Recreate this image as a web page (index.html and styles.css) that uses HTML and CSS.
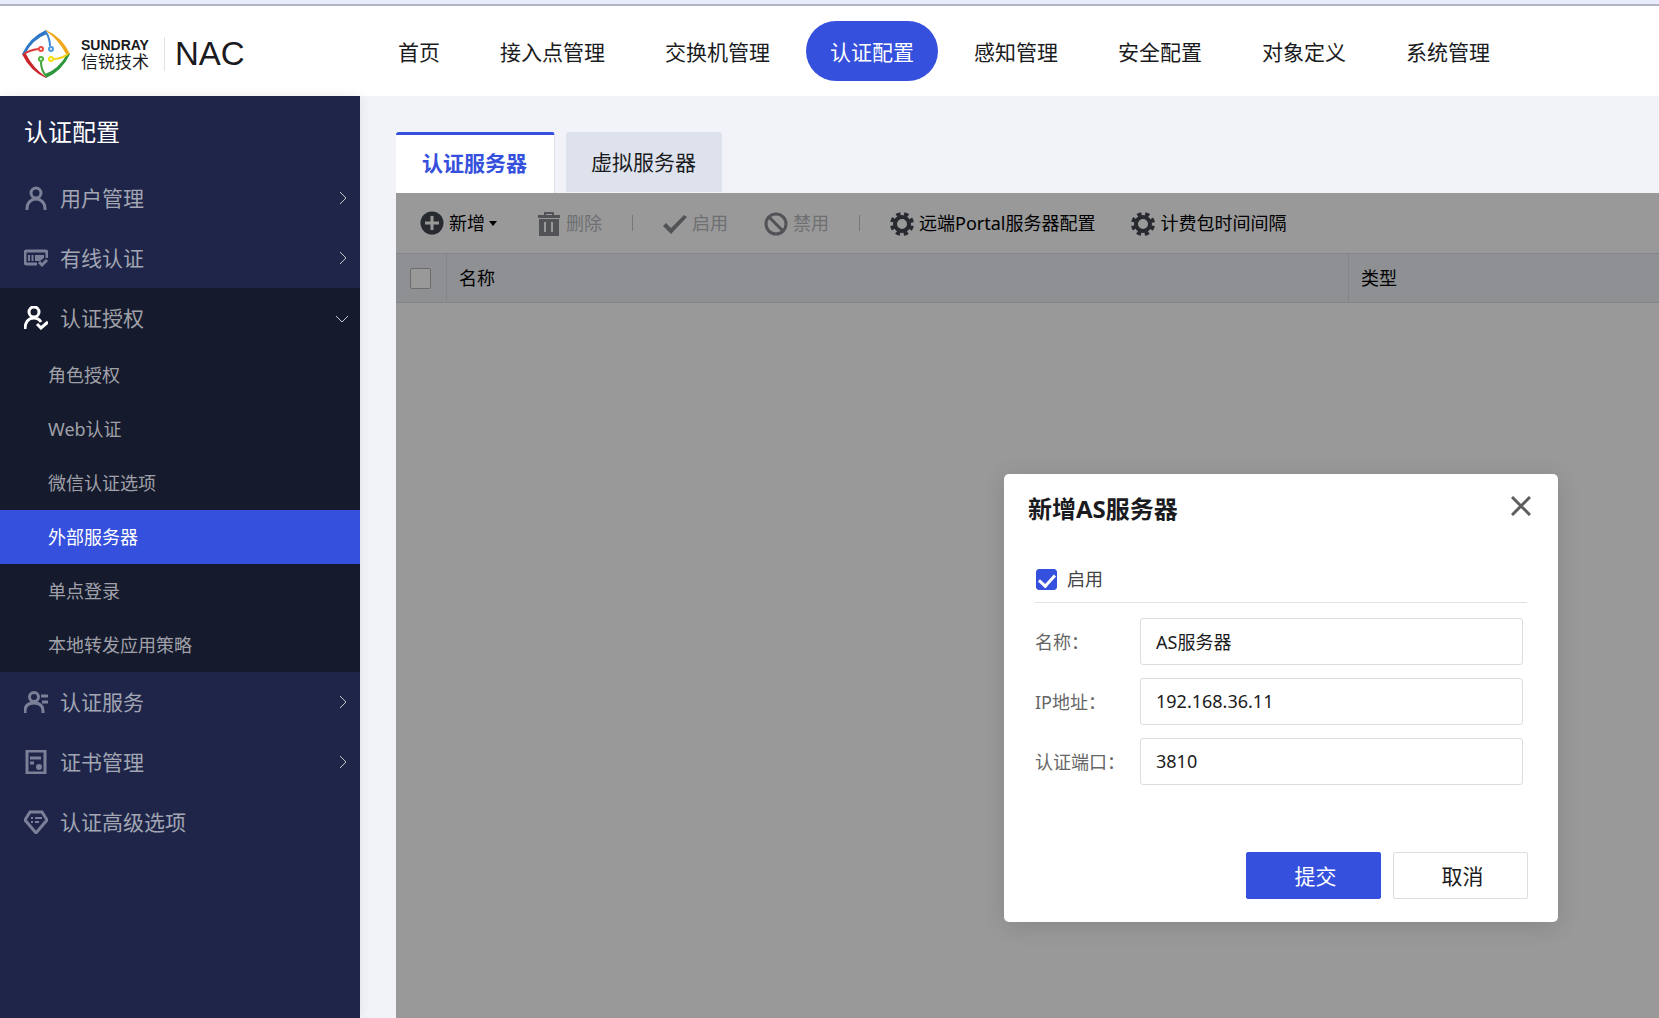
FILE: index.html
```html
<!DOCTYPE html>
<html lang="zh-CN">
<head>
<meta charset="utf-8">
<title>NAC - 认证服务器</title>
<link rel="stylesheet" href="styles.css">
</head>
<body>
<header class="header">
  <a class="brand" href="#">
    <svg class="brand-mark" viewBox="0 0 48 48" width="48" height="48" fill="none" stroke-width="2">
      <path d="M0 24Q8 7 24 0L25 4Q11 9 3 24Z" fill="#2f78c8"/>
      <path d="M24 0Q40 7 48 24L44 24Q37 10 24 1Z" fill="#f2a71b"/>
      <path d="M48 24Q40 41 24 48L23 44Q37 39 45 24Z" fill="#2e963c"/>
      <path d="M24 48Q8 41 0 24L4 24Q11 38 24 47Z" fill="#c8242b"/>
      <path d="M24 2Q28 9 28 16" stroke="#3a86d2"/><circle cx="29" cy="19" r="2" stroke="#4a9ae0"/>
      <path d="M46 24Q39 29 32 29" stroke="#f6cf12"/><circle cx="29" cy="29" r="2" stroke="#f0e010"/>
      <path d="M24 46Q19 40 19 32" stroke="#3f9f3c"/><circle cx="19" cy="29" r="2" stroke="#4db53a"/>
      <path d="M2 24Q8 20 16 19" stroke="#dc3a3a"/><circle cx="19" cy="19" r="2" stroke="#ee4a44"/>
    </svg>
    <span class="brand-name"><span class="brand-en">SUNDRAY</span><span class="brand-cn">信锐技术</span></span>
    <span class="brand-product">NAC</span>
  </a>
  <nav class="nav">
    <a href="#">首页</a>
    <a href="#">接入点管理</a>
    <a href="#">交换机管理</a>
    <a class="active" href="#">认证配置</a>
    <a href="#">感知管理</a>
    <a href="#">安全配置</a>
    <a href="#">对象定义</a>
    <a href="#">系统管理</a>
  </nav>
</header>
<div class="body">
  <aside class="sidebar">
    <h1 class="sidebar-title">认证配置</h1>
    <a class="item" href="#">
      <svg class="icon" viewBox="0 0 24 24"><circle cx="12" cy="7" r="5"/><path d="M3 24v-2a9 9 0 0 1 18 0v2"/></svg>
      <span>用户管理</span>
      <svg class="arrow" viewBox="0 0 12 12"><path d="M4 0l6 6-6 6"/></svg>
    </a>
    <a class="item" href="#">
      <svg class="icon" viewBox="0 0 24 24"><path d="M13 18H3q-2 0-2-2V7q0-2 2-2h18q2 0 2 2v5"/><path d="M5 9v6M8.500 9v6" stroke-width="2"/><path class="solid" d="M11 9h9v3l-4 3h-5z"/><path d="M15 16l3 3 5-5" stroke-width="3"/></svg>
      <span>有线认证</span>
      <svg class="arrow" viewBox="0 0 12 12"><path d="M4 0l6 6-6 6"/></svg>
    </a>
    <div class="group">
      <a class="item open" href="#">
        <svg class="icon" viewBox="0 0 24 24"><circle cx="10" cy="6" r="5"/><path d="M1 23c0-6 3-11 9-11 3 0 5 1 7 4"/><path d="M13 18l4 4 7-6" stroke-width="3"/></svg>
        <span>认证授权</span>
        <svg class="arrow" viewBox="0 0 12 12"><path d="M0 4l6 6 6-6"/></svg>
      </a>
      <a class="sub" href="#">角色授权</a>
      <a class="sub" href="#">Web认证</a>
      <a class="sub" href="#">微信认证选项</a>
      <a class="sub active" href="#">外部服务器</a>
      <a class="sub" href="#">单点登录</a>
      <a class="sub" href="#">本地转发应用策略</a>
    </div>
    <a class="item" href="#">
      <svg class="icon" viewBox="0 0 24 24"><circle cx="10" cy="7" r="4.500"/><path d="M1 23v-2q0-8 9-8t9 8v2M17 6h7M18 12h6"/></svg>
      <span>认证服务</span>
      <svg class="arrow" viewBox="0 0 12 12"><path d="M4 0l6 6-6 6"/></svg>
    </a>
    <a class="item" href="#">
      <svg class="icon" viewBox="0 0 24 24"><path d="M3 1h18v22H3zM6 8h11M6 13h4"/><circle class="solid" cx="15" cy="17" r="3"/></svg>
      <span>证书管理</span>
      <svg class="arrow" viewBox="0 0 12 12"><path d="M4 0l6 6-6 6"/></svg>
    </a>
    <a class="item" href="#">
      <svg class="icon" viewBox="0 0 24 24"><path d="M6 2h12l5 8-11 13L1 10z"/><path d="M7 8h2M11 8h7M7 12h2M11 12h4" stroke-width="2"/></svg>
      <span>认证高级选项</span>
    </a>
  </aside>
  <main class="main">
    <div class="tabs" role="tablist">
      <button class="tab active" role="tab" aria-selected="true">认证服务器</button>
      <button class="tab" role="tab" aria-selected="false">虚拟服务器</button>
    </div>
    <section class="panel">
      <div class="toolbar">
        <button class="tool"><svg viewBox="0 0 24 24"><circle cx="12" cy="12" r="11.500"/><path d="M12 5v14M5 12h14" stroke="#fff" stroke-width="3"/></svg><span>新增</span><i class="caret"></i></button>
        <button class="tool" disabled><svg viewBox="0 0 24 24"><path fill-rule="evenodd" d="M1 4h6V1h10v3h6v3H1zM9 3v1h6V3zM2 8h20v17H2zM7 11v10h2V11zM14 11v10h2V11z"/></svg><span>删除</span></button>
        <span class="divider"></span>
        <button class="tool" disabled><svg viewBox="0 0 24 24"><path d="M0 15l3-3 5 5L21 4l3 2L8 23z"/></svg><span>启用</span></button>
        <button class="tool" disabled><svg viewBox="0 0 24 24" class="outline"><circle cx="12" cy="13" r="10"/><path d="M5 6l14 14"/></svg><span>禁用</span></button>
        <span class="divider"></span>
        <button class="tool"><svg viewBox="0 0 24 24" class="gear"><circle cx="12" cy="13" r="7" stroke-width="4"/><circle cx="12" cy="13" r="9.500" stroke-width="5" stroke-dasharray="4 3.461" stroke-dashoffset="-1.730"/></svg><span>远端Portal服务器配置</span></button>
        <button class="tool"><svg viewBox="0 0 24 24" class="gear"><circle cx="12" cy="13" r="7" stroke-width="4"/><circle cx="12" cy="13" r="9.500" stroke-width="5" stroke-dasharray="4 3.461" stroke-dashoffset="-1.730"/></svg><span>计费包时间间隔</span></button>
      </div>
      <table class="grid">
        <colgroup><col class="col-check"><col><col class="col-type"></colgroup>
        <thead><tr><th class="cell-check"><input class="check" type="checkbox" aria-label="全选"></th><th>名称</th><th>类型</th></tr></thead>
      </table>
      <div class="mask"></div>
      <form class="dialog" role="dialog" aria-labelledby="dialog-title">
        <div class="dialog-head">
          <h2 id="dialog-title">新增AS服务器</h2>
          <button class="close" type="button" aria-label="关闭"><svg viewBox="0 0 20 20" width="20" height="20"><path d="M1 1l18 18M19 1L1 19"/></svg></button>
        </div>
        <div class="fields">
          <label class="enable"><input class="check" type="checkbox" checked><span>启用</span></label>
          <div class="field"><label for="name">名称：</label><input id="name" type="text" value="AS服务器"></div>
          <div class="field"><label for="ip">IP地址：</label><input id="ip" type="text" value="192.168.36.11"></div>
          <div class="field"><label for="port">认证端口：</label><input id="port" type="text" value="3810"></div>
        </div>
        <div class="actions">
          <button class="btn primary" type="button">提交</button>
          <button class="btn" type="button">取消</button>
        </div>
      </form>
    </section>
  </main>
</div>
</body>
</html>
```
FILE: styles.css
```css
* {
  box-sizing: border-box;
}

body {
  margin: 0;
  min-height: 100vh;
  display: flex;
  flex-direction: column;
  background: #f2f3f9;
  border-top: 4px solid #e8edfd;
  color: #1a1b20;
  font: 18px/26px "Noto Sans", "Noto Sans CJK SC", sans-serif;
}

a {
  color: inherit;
  text-decoration: none;
}

button,
input {
  font: inherit;
  color: inherit;
}

button {
  padding: 0;
  border: 0;
  background: none;
}

/* Header */

.header {
  display: flex;
  height: 92px;
  border-top: 2px solid #b0b4c5;
  background: #fff;
}

.brand {
  flex: 0 0 374px;
  display: flex;
  align-items: center;
  padding: 6px 0 0 22px;
}

.brand-name {
  display: flex;
  flex-direction: column;
  margin-left: 11px;
  padding-right: 15px;
  border-right: 1px solid #e2e2e2;
}

.brand-en {
  font: 700 14px/16px "Liberation Sans", sans-serif;
}

.brand-cn {
  font-size: 17px;
  line-height: 18px;
}

.brand-product {
  margin-left: 10px;
  font: 33px/40px "Liberation Sans", sans-serif;
}

.nav {
  display: flex;
  gap: 12px;
  padding-top: 15px;
}

.nav a {
  height: 60px;
  padding: 0 24px;
  border-radius: 30px;
  font-size: 21px;
  line-height: 62px;
  white-space: nowrap;
}

.nav .active {
  background: #3550dc;
  color: #fff;
}

.body {
  flex: 1;
  display: flex;
}

/* Sidebar */

.sidebar {
  flex: 0 0 360px;
  background: #1e2548;
  box-shadow: 0 0 12px rgba(0, 0, 0, 0.08);
  color: #a2a5b3;
}

.sidebar-title {
  margin: 0;
  padding-left: 24px;
  color: #fff;
  font-size: 24px;
  font-weight: 400;
  line-height: 72px;
}

.item {
  display: flex;
  align-items: center;
  gap: 12px;
  height: 60px;
  padding: 0 12px 0 24px;
  font-size: 21px;
}

.icon {
  width: 24px;
  height: 24px;
  fill: none;
  stroke: #7b8098;
  stroke-width: 3;
}

.icon .solid {
  fill: #7b8098;
  stroke: none;
}

.open .icon {
  stroke: #fff;
}

.arrow {
  width: 12px;
  height: 12px;
  margin-left: auto;
  fill: none;
  stroke: #c6c8d0;
  overflow: visible;
}

.group {
  background: #151a2d;
  color: #a0a1a8;
}

.sub {
  display: block;
  padding-left: 48px;
  line-height: 54px;
}

.sub.active {
  background: #3550dc;
  color: #fff;
}

/* Content */

.main {
  flex: 1;
  min-width: 0;
  display: flex;
  flex-direction: column;
  padding: 36px 0 0 36px;
}

.tabs {
  display: flex;
  align-items: flex-start;
  gap: 11px;
}

.tab {
  height: 60px;
  padding: 0 26px 0 25px;
  border-radius: 3px 3px 0 0;
  background: #dee2ed;
  font-size: 21px;
}

.tab.active {
  height: 61px;
  padding: 0 27px 2px 26px;
  border-top: 3px solid #3550dc;
  border-right: 1px solid #dee2ed;
  background: #fff;
  color: #3550dc;
  font-weight: 700;
}

.panel {
  position: relative;
  flex: 1;
  background: #fff;
}

.mask {
  position: absolute;
  inset: 0;
  background: rgba(0, 0, 0, 0.4);
}

.toolbar {
  display: flex;
  align-items: center;
  gap: 36px;
  height: 60px;
  padding-left: 24px;
}

.tool {
  display: flex;
  align-items: center;
  gap: 5px;
  color: #000;
  white-space: nowrap;
}

.tool svg {
  width: 24px;
  height: 24px;
  fill: #42464f;
  overflow: visible;
}

.tool .gear {
  fill: none;
  stroke: #42464f;
}

.tool:disabled {
  color: #b9bbbf;
}

.tool:disabled svg {
  fill: #888a91;
}

.tool:disabled .outline {
  fill: none;
  stroke: #888a91;
  stroke-width: 3;
}

.caret {
  margin-right: 4px;
  margin-left: -1px;
  border: 4px solid transparent;
  border-top: 5px solid #000;
  border-bottom: 0;
}

.divider {
  width: 1px;
  height: 16px;
  margin: 0 -6px;
  background: #c8c9ce;
}

.grid {
  width: 100%;
  table-layout: fixed;
  border-collapse: separate;
  border-spacing: 0;
}

.col-check {
  width: 51px;
}

.col-type {
  width: 310px;
}

.grid th {
  height: 50px;
  padding: 0 12px;
  border: solid #dcdfe6;
  border-width: 1px 1px 1px 0;
  background: #edf0f6;
  color: #000;
  font-weight: 400;
  text-align: left;
}

.grid th:last-child {
  border-right: 0;
}

.grid .cell-check {
  padding: 0 0 0 14px;
}

.check {
  appearance: none;
  display: block;
  width: 21px;
  height: 21px;
  margin: 0;
  border: 1px solid #b5b5b5;
  border-radius: 2px;
  background: #fff;
}

.check:checked {
  border-color: #3550dc;
  border-radius: 3px;
  background: #3550dc;
}

.check:checked::before {
  content: "";
  display: block;
  width: 7px;
  height: 13px;
  margin: 1px auto 0;
  border: solid #fff;
  border-width: 0 3px 3px 0;
  transform: rotate(42deg);
}

/* Dialog */

.dialog {
  position: absolute;
  top: 281px;
  right: 101px;
  width: 554px;
  padding: 19px 30px 23px 31px;
  border-radius: 5px;
  background: #fff;
  box-shadow: 0 4px 24px rgba(0, 0, 0, 0.12);
}

.dialog-head {
  display: flex;
  justify-content: space-between;
  align-items: flex-start;
  margin-left: -7px;
}

.dialog h2 {
  margin: 0;
  font-size: 24px;
  font-weight: 700;
  line-height: 32px;
}

.close {
  margin: 3px -3px 0 0;
}

.close svg {
  display: block;
  fill: none;
  stroke: #5e5e5e;
  stroke-width: 3;
}

.enable {
  display: flex;
  align-items: center;
  gap: 10px;
  height: 47px;
  margin: 31px 1px 15px 0;
  padding-left: 1px;
  border-bottom: 1px solid #dde2e9;
  color: #444;
}

.field {
  display: flex;
  align-items: center;
  margin: 0 5px 13px 0;
}

.field label {
  flex: 0 0 105px;
  color: #666;
}

.field input {
  flex: 1;
  min-width: 0;
  height: 47px;
  padding: 0 15px 2px;
  border: 1px solid #dcdddf;
  border-radius: 3px;
  background: #fff;
}

.actions {
  display: flex;
  justify-content: flex-end;
  gap: 12px;
  margin-top: 67px;
}

.btn {
  width: 135px;
  height: 47px;
  padding-left: 4px;
  border: 1px solid #dcdddf;
  border-radius: 2px;
  font-size: 21px;
}

.btn.primary {
  border-color: #3550dc;
  background: #3550dc;
  color: #fff;
}
```
